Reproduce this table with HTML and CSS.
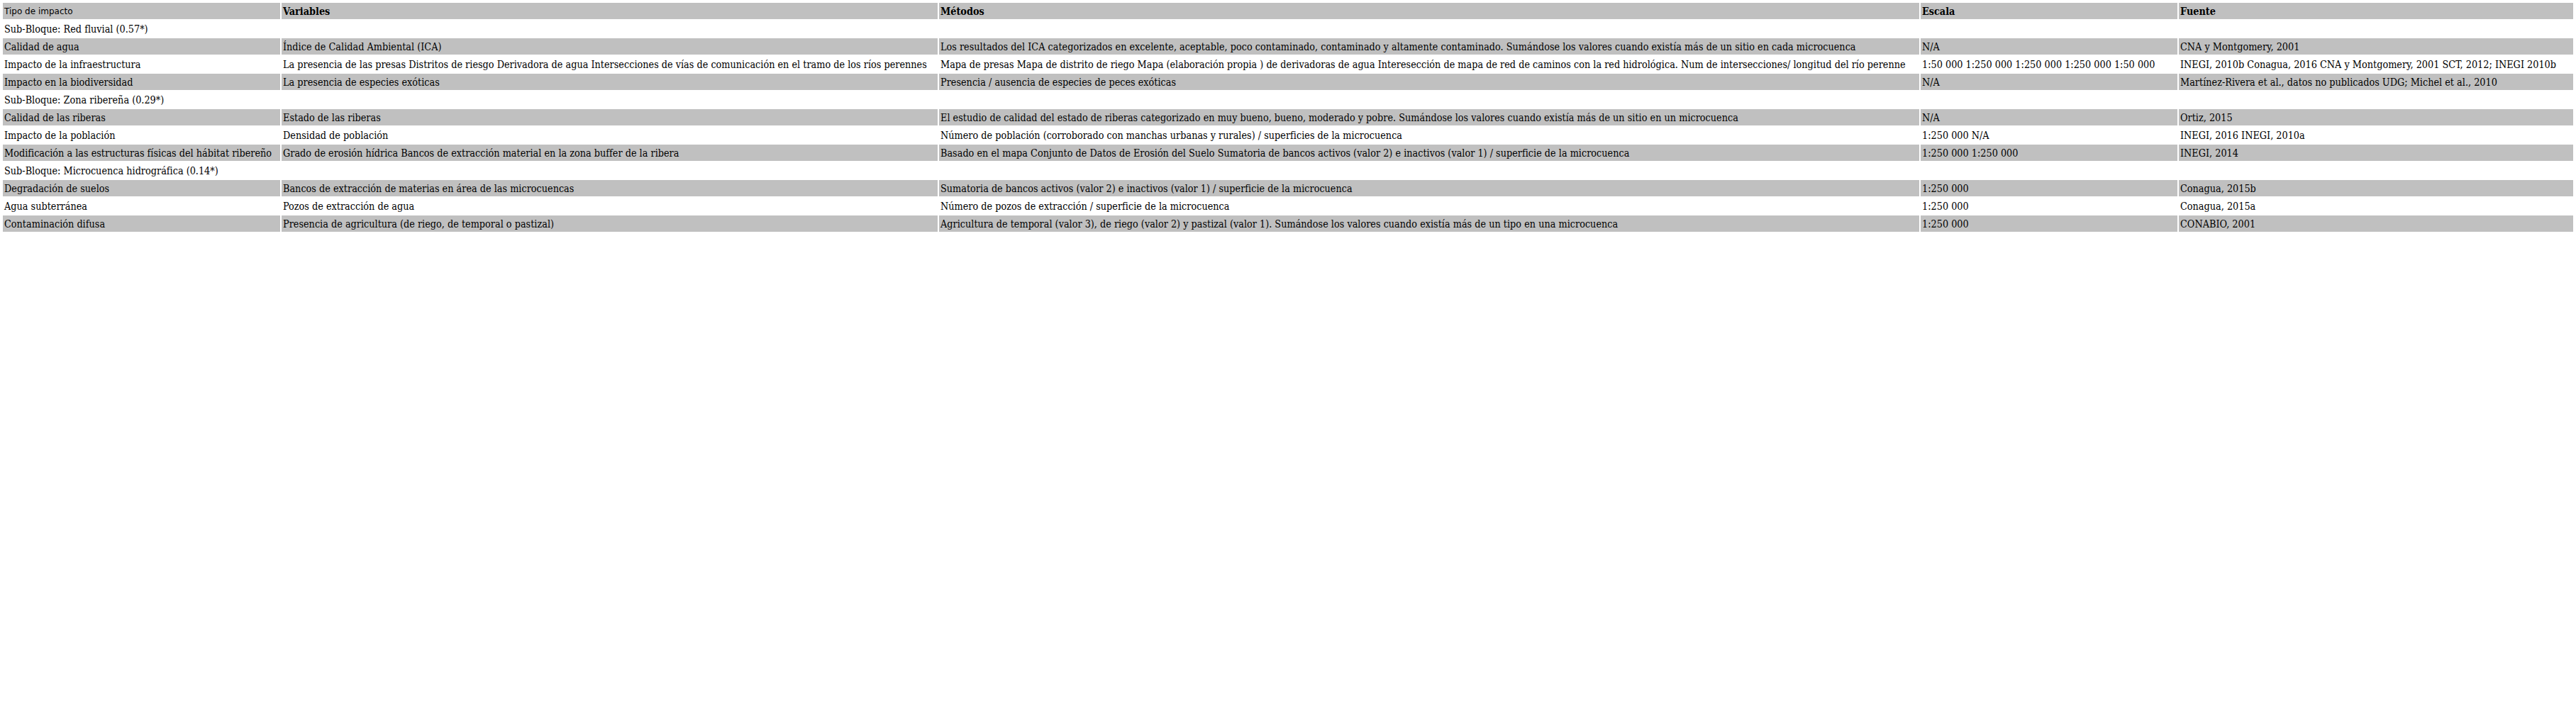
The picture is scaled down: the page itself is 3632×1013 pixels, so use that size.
FILE: index.html
```html
<!DOCTYPE html>
<html lang="es">
<head>
<meta charset="utf-8">
<title>Tabla de impactos</title>
<link rel="stylesheet" href="styles.css">
</head>
<body>
<table class="impact-table">
  <colgroup>
    <col class="c-tipo">
    <col class="c-var">
    <col class="c-met">
    <col class="c-esc">
    <col class="c-fue">
  </colgroup>
  <thead>
    <tr class="shade">
      <th class="h-tipo">Tipo de impacto</th>
      <th>Variables</th>
      <th>Métodos</th>
      <th>Escala</th>
      <th>Fuente</th>
    </tr>
  </thead>
  <tbody>
    <tr><td class="sub" colspan="5">Sub-Bloque: Red fluvial (0.57*)</td></tr>
    <tr class="shade"><td>Calidad de agua</td><td>Índice de Calidad Ambiental (ICA)</td><td>Los resultados del ICA categorizados en excelente, aceptable, poco contaminado, contaminado y altamente contaminado. Sumándose los valores cuando existía más de un sitio en cada microcuenca</td><td>N/A</td><td>CNA y Montgomery, 2001</td></tr>
    <tr><td>Impacto de la infraestructura</td><td>La presencia de las presas Distritos de riesgo Derivadora de agua Intersecciones de vías de comunicación en el tramo de los ríos perennes</td><td>Mapa de presas Mapa de distrito de riego Mapa (elaboración propia ) de derivadoras de agua Interesección de mapa de red de caminos con la red hidrológica. Num de intersecciones/ longitud del río perenne</td><td>1:50 000 1:250 000 1:250 000 1:250 000 1:50 000</td><td>INEGI, 2010b Conagua, 2016 CNA y Montgomery, 2001 SCT, 2012; INEGI 2010b</td></tr>
    <tr class="shade"><td>Impacto en la biodiversidad</td><td>La presencia de especies exóticas</td><td>Presencia / ausencia de especies de peces exóticas</td><td>N/A</td><td>Martínez-Rivera et al., datos no publicados UDG; Michel et al., 2010</td></tr>
    <tr><td class="sub" colspan="5">Sub-Bloque: Zona ribereña (0.29*)</td></tr>
    <tr class="shade"><td>Calidad de las riberas</td><td>Estado de las riberas</td><td>El estudio de calidad del estado de riberas categorizado en muy bueno, bueno, moderado y pobre. Sumándose los valores cuando existía más de un sitio en un microcuenca</td><td>N/A</td><td>Ortiz, 2015</td></tr>
    <tr><td>Impacto de la población</td><td>Densidad de población</td><td>Número de población (corroborado con manchas urbanas y rurales) / superficies de la microcuenca</td><td>1:250 000 N/A</td><td>INEGI, 2016 INEGI, 2010a</td></tr>
    <tr class="shade"><td>Modificación a las estructuras físicas del hábitat ribereño</td><td>Grado de erosión hídrica Bancos de extracción material en la zona buffer de la ribera</td><td>Basado en el mapa Conjunto de Datos de Erosión del Suelo Sumatoria de bancos activos (valor 2) e inactivos (valor 1) / superficie de la microcuenca</td><td>1:250 000 1:250 000</td><td>INEGI, 2014</td></tr>
    <tr><td class="sub" colspan="5">Sub-Bloque: Microcuenca hidrográfica (0.14*)</td></tr>
    <tr class="shade"><td>Degradación de suelos</td><td>Bancos de extracción de materias en área de las microcuencas</td><td>Sumatoria de bancos activos (valor 2) e inactivos (valor 1) / superficie de la microcuenca</td><td>1:250 000</td><td>Conagua, 2015b</td></tr>
    <tr><td>Agua subterránea</td><td>Pozos de extracción de agua</td><td>Número de pozos de extracción / superficie de la microcuenca</td><td>1:250 000</td><td>Conagua, 2015a</td></tr>
    <tr class="shade"><td>Contaminación difusa</td><td>Presencia de agricultura (de riego, de temporal o pastizal)</td><td>Agricultura de temporal (valor 3), de riego (valor 2) y pastizal (valor 1). Sumándose los valores cuando existía más de un tipo en una microcuenca</td><td>1:250 000</td><td>CONABIO, 2001</td></tr>
  </tbody>
</table>
</body>
</html>
```
FILE: styles.css
```css
html, body {
  background: #ffffff;
}
body {
  margin: 2px;
  color: #000000;
  font-family: "DejaVu Serif", "Liberation Serif", serif;
  font-stretch: condensed;
  font-size: 14.3px;
}
.impact-table {
  width: 100%;
  border-collapse: separate;
  border-spacing: 2px;
}
.c-tipo { width: 391px; }
.c-var { width: 925px; }
.c-met { width: 1382px; }
.c-esc { width: 362px; }
.c-fue { width: 556px; }
.impact-table th,
.impact-table td {
  padding: 1px 2px;
  height: 21px;
  text-align: left;
  vertical-align: middle;
  white-space: nowrap;
}
.impact-table th {
  font-weight: bold;
}
.impact-table .h-tipo {
  font-family: "DejaVu Sans", sans-serif;
  font-stretch: normal;
  font-weight: normal;
  font-size: 12px;
}
.shade td,
.shade th {
  background: #c0c0c0;
}
```
